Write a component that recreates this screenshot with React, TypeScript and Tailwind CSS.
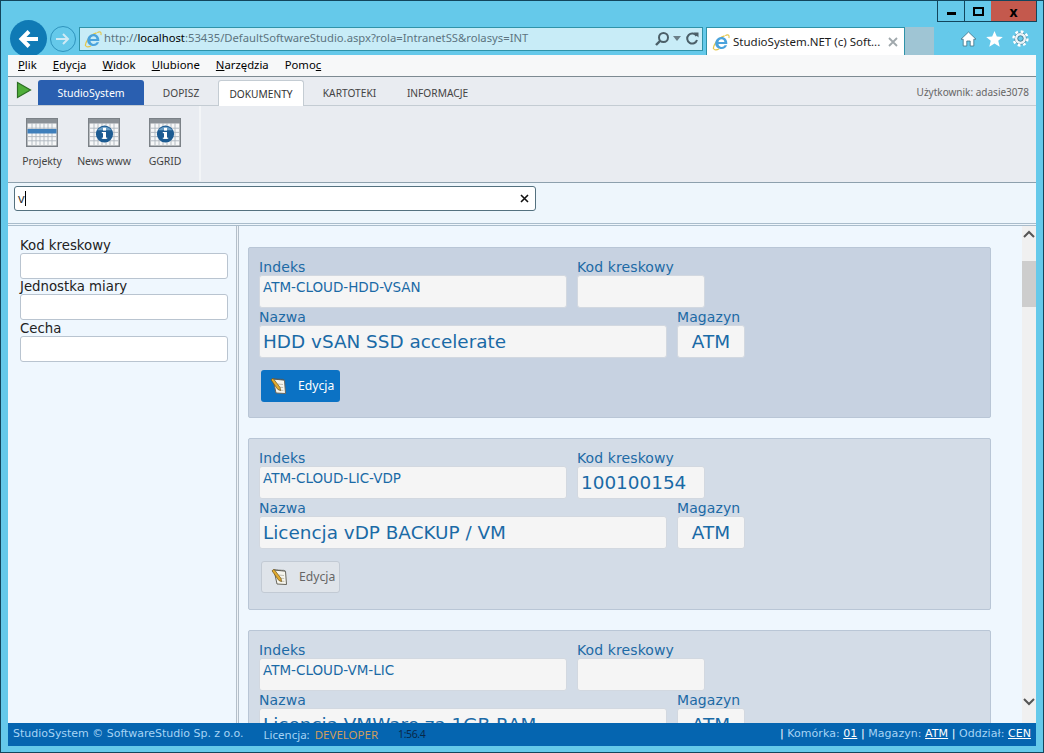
import React from "react";

const SANS = "font-['Noto_Sans','Open_Sans',sans-serif]";
const DJ = "font-['DejaVu_Sans',sans-serif]";

function IeLogo({ size = 20 }: { size?: number }) {
  return (
    <svg width={size} height={size} viewBox="0 0 20 20" className="shrink-0">
      <path d="M2 18C0.4 15.6 5.4 5.8 14 3.2" fill="none" stroke="#e5c64a" strokeWidth="1.5" />
      <path d="M14.6 2.9c3-1.7 5-0.8 4.2 2.8" fill="none" stroke="#e5c64a" strokeWidth="1.2" />
      <path d="M2.2 18.2c1.6 1 4.2 0.3 5.8-0.7" fill="none" stroke="#e5c64a" strokeWidth="1.2" />
      <path d="M3.6 11.8C3.6 7.5 6.8 4.4 10.6 4.4c3.8 0 6.4 2.9 6.4 6.8v1.1H7.2c0.2 2 1.7 3.2 3.6 3.2 1.4 0 2.5-0.6 3.1-1.8h2.8c-0.9 2.6-3.1 4.2-5.9 4.2C6.4 17.9 3.6 15.3 3.6 11.8zM7.2 9.9h6.6c-0.1-1.7-1.4-3-3.2-3-1.8 0-3.2 1.2-3.4 3z" fill="#4aa3dd" fillRule="evenodd" />
    </svg>
  );
}

function GridIcon({ info }: { info?: boolean }) {
  const lines = [];
  for (let i = 1; i < 7; i++) lines.push(<path key={"v" + i} d={`M${2 + i * 4} 5V27`} stroke="#aeb6bd" strokeWidth="0.9" />);
  for (let i = 1; i < 5; i++) lines.push(<path key={"h" + i} d={`M2 ${6 + i * 4.2}H30`} stroke="#aeb6bd" strokeWidth="0.9" />);
  return (
    <svg width="32" height="29" viewBox="0 0 32 29">
      <rect x="0.75" y="0.75" width="30.5" height="27.5" fill="#f6f7f8" stroke="#7b8187" strokeWidth="1.5" />
      <rect x="1" y="1" width="30" height="4.5" fill="#8b9197" />
      {lines}
      {info ? (
        <>
          <circle cx="16.5" cy="16" r="8.6" fill="#1c5b92" />
          <path d="M9.6 12.2a8 7 0 0 1 13.8 0z" fill="#6a9ec6" />
          <rect x="15" y="14" width="3" height="6.8" fill="#fff" />
          <rect x="15" y="9.8" width="3" height="2.8" fill="#fff" />
          <rect x="13.8" y="14" width="1.4" height="1.2" fill="#fff" />
          <rect x="13.8" y="19.6" width="5.4" height="1.2" fill="#fff" />
        </>
      ) : (
        <rect x="1.5" y="11" width="29" height="4.5" fill="#3f7fbb" />
      )}
    </svg>
  );
}

function EditIcon() {
  return (
    <svg width="17" height="18" viewBox="0 0 17 18" className="shrink-0">
      <path d="M3 2L14.5 3.2 15.5 16.5 6 16z" fill="#f7f6ee" stroke="#66655c" strokeWidth="1" />
      <path d="M3.5 1.6l10.5 1" stroke="#55544c" strokeWidth="1.2" strokeDasharray="1 1" />
      <path d="M7.5 7l5.5.5M8 10l5.2.5M8.4 13l5 .4" stroke="#b3b1a4" strokeWidth="0.8" />
      <path d="M1 2.8l2-1.6 7 9.2 0.6 3.2-3-1.4z" fill="#e2ab2f" stroke="#6d5215" strokeWidth="0.7" />
    </svg>
  );
}

function Field({ label, value, w, big, center }: { label: string; value: string; w: string; big?: boolean; center?: boolean }) {
  return (
    <div className={`flex flex-col ${w}`}>
      <div className="h-[16px] text-[14px] leading-[16px] tracking-[0.1px] text-[#1d6aa5] whitespace-nowrap">{label}</div>
      <div className={`h-[33px] w-full rounded-[3px] border border-[#d2d8e0] bg-[#f5f5f5] text-[#1a6aa6] overflow-hidden whitespace-nowrap ${center ? "text-center" : "pl-[3px]"} ${big ? "text-[18.4px] leading-[31px]" : "text-[13.5px] leading-[23px]"}`}>
        {value}
      </div>
    </div>
  );
}

function Card({ idx, kod, kodBig, nazwa, active, last }: { idx: string; kod: string; kodBig?: boolean; nazwa: string; active?: boolean; last?: boolean }) {
  return (
    <div className={`w-[743px] shrink-0 rounded-[2px] border border-[#b9c6d6] pl-[10px] pt-[11px] ${DJ} ${active ? "mb-[20px] h-[171px] bg-[#c7d2e1]" : "bg-[#d3dce7]"} ${!active && !last ? "mb-[20px] h-[172px]" : ""}`}>
      <div className="flex gap-[10px]">
        <Field label="Indeks" value={idx} w="w-[308px]" />
        <Field label="Kod kreskowy" value={kod} w="w-[128px]" big={kodBig} />
      </div>
      <div className="flex gap-[10px] mt-px">
        <Field label="Nazwa" value={nazwa} w="w-[408px]" big />
        <Field label="Magazyn" value="ATM" w="w-[68px]" big center />
      </div>
      <button className={`mt-[12px] ml-[2px] flex h-[32px] w-[79px] items-center gap-[11px] rounded-[3px] pl-[9px] ${SANS} text-[12.2px] ${active ? "bg-[#0b72c4] text-white" : "border border-[#c2cad4] bg-[#dfe4ea] text-[#666]"}`}>
        <EditIcon />
        <span>Edycja</span>
      </button>
    </div>
  );
}

function Side({ label, mt = "" }: { label: string; mt?: string }) {
  return (
    <div className={mt}>
      <div className="h-[16px] text-[13.3px] leading-[18px] text-[#222]">{label}</div>
      <div className="h-[26px] w-[208px] rounded-[3px] border border-[#b9c4d0] bg-white" />
    </div>
  );
}

export default function App() {
  const menu: [string, string, string][] = [
    ["", "P", "lik"],
    ["", "E", "dycja"],
    ["", "W", "idok"],
    ["", "U", "lubione"],
    ["", "N", "arzędzia"],
    ["Pomo", "c", ""],
  ];
  return (
    <div className={`flex h-[753px] w-[1044px] flex-col overflow-hidden border border-[#12455c] bg-[#65c9ea] px-[7px] pb-[6px] ${SANS}`}>
      {/* browser chrome */}
      <div className="relative flex h-[54px] shrink-0 items-end">
        <div className="absolute right-[-1px] top-0 flex h-[21px] border border-t-0 border-[#12455c]">
          <div className="flex w-[27px] items-center justify-center border-r border-[#12455c]"><div className="mt-[4px] h-[3px] w-[9px] bg-black" /></div>
          <div className="flex w-[26px] items-center justify-center"><div className="h-[9px] w-[11px] border-2 border-black" /></div>
          <div className="flex w-[45px] items-center justify-center bg-[#c4594d] text-[14px] font-bold text-black">x</div>
        </div>
        <div className="flex h-[33px] w-full items-center pl-[2px]">
          <div className="flex h-[37px] w-[37px] shrink-0 items-center justify-center rounded-full bg-[#0f7ab5]">
            <svg width="22" height="20" viewBox="0 0 22 20"><path d="M20 10H4M11 2.5L3.5 10l7.5 7.5" fill="none" stroke="#fff" strokeWidth="4" /></svg>
          </div>
          <div className="ml-[3px] flex h-[26px] w-[26px] shrink-0 items-center justify-center rounded-full border border-[#2f93bd]">
            <svg width="16" height="14" viewBox="0 0 16 14"><path d="M1 7h12M8 2l5 5-5 5" fill="none" stroke="#cfeaf5" strokeWidth="2" /></svg>
          </div>
          <div className="ml-[3px] flex h-[24px] w-[624px] shrink-0 items-center border border-[#2f93a9] bg-[#c8ecf7] pl-[4px] text-[11.25px] text-[#5c7480]">
            <IeLogo size={18} />
            <span className="ml-[2px]">http://<b className="font-normal text-black">localhost</b>:53435/DefaultSoftwareStudio.aspx?rola=IntranetSS&amp;rolasys=INT</span>
            <svg className="ml-auto" width="16" height="16" viewBox="0 0 16 16"><circle cx="9.5" cy="6.5" r="4.5" fill="none" stroke="#4b5f68" strokeWidth="2" /><path d="M6 10l-4 4" stroke="#4b5f68" strokeWidth="2.4" /></svg>
            <svg className="ml-[3px]" width="8" height="5" viewBox="0 0 8 5"><path d="M0 0h8L4 5z" fill="#6b7f88" /></svg>
            <svg className="ml-[4px] mr-[3px]" width="14" height="14" viewBox="0 0 14 14"><path d="M11.5 4A5 5 0 1 0 12 8" fill="none" stroke="#4b5f68" strokeWidth="2" /><path d="M8.5 0.5h5v5z" fill="#4b5f68" /></svg>
          </div>
          <div className="ml-[3px] flex h-[28px] w-[199px] shrink-0 items-center self-end border border-b-0 border-[#2f93a9] bg-white pl-[5px] text-[11.5px] text-[#1c1c1c]">
            <IeLogo size={18} />
            <span className="ml-[3px] whitespace-nowrap">StudioSystem.NET (c) Soft...</span>
            <svg className="ml-auto mr-[6px]" width="10" height="10" viewBox="0 0 10 10"><path d="M1 1l8 8M9 1L1 9" stroke="#a0a8ac" strokeWidth="1.8" /></svg>
          </div>
          <div className="h-[28px] w-[29px] shrink-0 self-end bg-[#9fc5d4]" />
          <div className="ml-auto mr-[7px] flex items-center gap-[9px] text-white">
            <svg width="17" height="16" viewBox="0 0 17 16"><path d="M8.5 1L1 8.2h2.2V15h3.6V10h3.4v5h3.6V8.2H16z" fill="#fff" stroke="#3d7186" strokeWidth="0.8" /></svg>
            <svg width="17" height="16" viewBox="0 0 16 15"><path d="M8 0l2.2 5.2 5.6.4-4.3 3.6 1.4 5.5L8 11.7l-4.9 3 1.4-5.5L.2 5.6l5.6-.4z" fill="#fff" /></svg>
            <svg width="17" height="17" viewBox="0 0 16 16"><circle cx="8" cy="8" r="5.6" fill="#e8f4f9" stroke="#3d7186" strokeWidth="0.6" /><circle cx="8" cy="8" r="6.6" fill="none" stroke="#fff" strokeWidth="2.2" strokeDasharray="2.6 2.58" /><circle cx="8" cy="8" r="2.6" fill="#65c9ea" stroke="#3d7186" strokeWidth="0.8" /></svg>
          </div>
        </div>
      </div>

      {/* menu */}
      <div className="relative flex h-[22px] shrink-0 items-center gap-[16px] border-b border-[#7d8a92] bg-[#f7f8f9] pl-[10px] text-[11.3px] text-black">
        {menu.map(([a, u, b]) => (
          <span key={u + b}>{a}<u>{u}</u>{b}</span>
        ))}
      </div>

      {/* tabs */}
      <div className="flex h-[29px] shrink-0 items-end border-b border-[#c4ccd3] bg-[#e9ecf1] pr-[7px]">
        <svg className="mb-[3px] ml-[8px] mr-[6px] self-center" width="16" height="18" viewBox="0 0 16 18"><path d="M1.5 1.5L14.5 9 1.5 16.5z" fill="#4fae3a" stroke="#2c6e24" strokeWidth="1.2" /></svg>
        <div className="flex h-[25px] w-[106px] items-center justify-center rounded-t-[3px] bg-[#2a5fb0] pt-[3px] text-[10.5px] text-white">StudioSystem</div>
        <div className="flex h-[25px] w-[74px] items-center justify-center pt-[3px] text-[10.2px] text-[#444]">DOPISZ</div>
        <div className="-mb-px flex h-[26px] w-[86px] items-center justify-center rounded-t-[3px] border border-b-0 border-[#c4ccd3] bg-white pt-[3px] text-[10.2px] text-[#333]">DOKUMENTY</div>
        <div className="flex h-[25px] w-[91px] items-center justify-center pt-[3px] text-[10.2px] text-[#444]">KARTOTEKI</div>
        <div className="flex h-[25px] w-[85px] items-center justify-center pt-[3px] text-[10.2px] text-[#444]">INFORMACJE</div>
        <div className="ml-auto mt-[3px] self-center text-[10px] text-[#666]">Użytkownik: adasie3078</div>
      </div>

      {/* ribbon */}
      <div className="flex h-[77px] shrink-0 border-b border-[#8da0ad] bg-[#e9ecf1] text-[10.5px] tracking-[-0.1px] text-[#444]">
        <div className="mb-px flex w-[193px] border-r-2 border-[#f3f5f7] pl-[8px] pt-[12px]">
          <div className="flex w-[52px] flex-col items-center gap-[7px]"><GridIcon /><span>Projekty</span></div>
          <div className="ml-[9px] flex w-[54px] flex-col items-center gap-[7px]"><GridIcon info /><span className="whitespace-nowrap">News www</span></div>
          <div className="ml-[9px] flex w-[50px] flex-col items-center gap-[7px]"><GridIcon info /><span>GGRID</span></div>
        </div>
      </div>

      {/* search */}
      <div className="flex h-[43px] shrink-0 items-start border-b-[3px] border-double border-[#a9bccb] bg-[#eef6fc] pl-[6px] pt-[3px]">
        <div className={`flex h-[25px] w-[522px] items-center rounded-[3px] border border-[#54717f] bg-white pl-[3px] pr-[6px] text-[13px] text-[#333] ${SANS}`}>
          <span>v</span>
          <span className="h-[15px] w-px bg-black" />
          <svg className="ml-auto" width="9" height="9" viewBox="0 0 9 9"><path d="M1 1l7 7M8 1L1 8" stroke="#111" strokeWidth="1.6" /></svg>
        </div>
      </div>

      {/* main */}
      <div className="flex min-h-0 flex-1 bg-[#eff7fe]">
        <div className={`w-[228px] shrink-0 pl-[12px] pt-[11px] ${DJ}`}>
          <Side label="Kod kreskowy" />
          <Side label="Jednostka miary" mt="-mt-px" />
          <Side label="Cecha" />
        </div>
        <div className="w-[3px] shrink-0 border-x border-[#b4bfca] bg-[#eef3f8]" />
        <div className="flex min-w-0 flex-1 flex-col overflow-hidden pl-[9px] pt-[21px]">
          <Card idx="ATM-CLOUD-HDD-VSAN" kod="" nazwa="HDD vSAN SSD accelerate" active />
          <Card idx="ATM-CLOUD-LIC-VDP" kod="100100154" kodBig nazwa="Licencja vDP BACKUP / VM" />
          <Card idx="ATM-CLOUD-VM-LIC" kod="" nazwa="Licencja VMWare za 1GB RAM" last />
        </div>
        <div className="flex w-[14px] shrink-0 flex-col bg-[#f0f0f0]">
          <div className="mt-[1px] flex h-[14px] items-center justify-center">
            <svg width="12" height="8" viewBox="0 0 12 8"><path d="M1 7l5-5 5 5" fill="none" stroke="#555" strokeWidth="2" /></svg>
          </div>
          <div className="mt-[20px] h-[46px] bg-[#cdcdcd]" />
          <div className="mb-[16px] mt-auto flex h-[10px] items-center justify-center">
            <svg width="12" height="8" viewBox="0 0 12 8"><path d="M1 1l5 5 5-5" fill="none" stroke="#555" strokeWidth="2" /></svg>
          </div>
        </div>
      </div>

      {/* status */}
      <div className={`flex h-[23px] shrink-0 items-center bg-[#0565b0] px-[5px] text-[11px] text-[#a6d4f5] ${DJ}`}>
        <span className="tracking-[-0.02px]">StudioSystem © SoftwareStudio Sp. z o.o.</span>
        <span className={`ml-[20px] text-[11.5px] ${SANS}`}>Licencja: <span className="ml-[2px] text-[#cf9d5d]">DEVELOPER</span></span>
        <span className={`ml-[20px] text-[10.5px] tracking-[-0.4px] text-[#082848] ${SANS}`}>1:56.4</span>
        <span className="ml-auto whitespace-nowrap tracking-[0.05px]">
          <span className="text-white">|</span> Komórka: <u className="text-white">01</u> <span className="text-white">|</span> Magazyn: <u className="text-white">ATM</u> <span className="text-white">|</span> Oddział: <u className="text-white">CEN</u>
        </span>
      </div>
    </div>
  );
}
